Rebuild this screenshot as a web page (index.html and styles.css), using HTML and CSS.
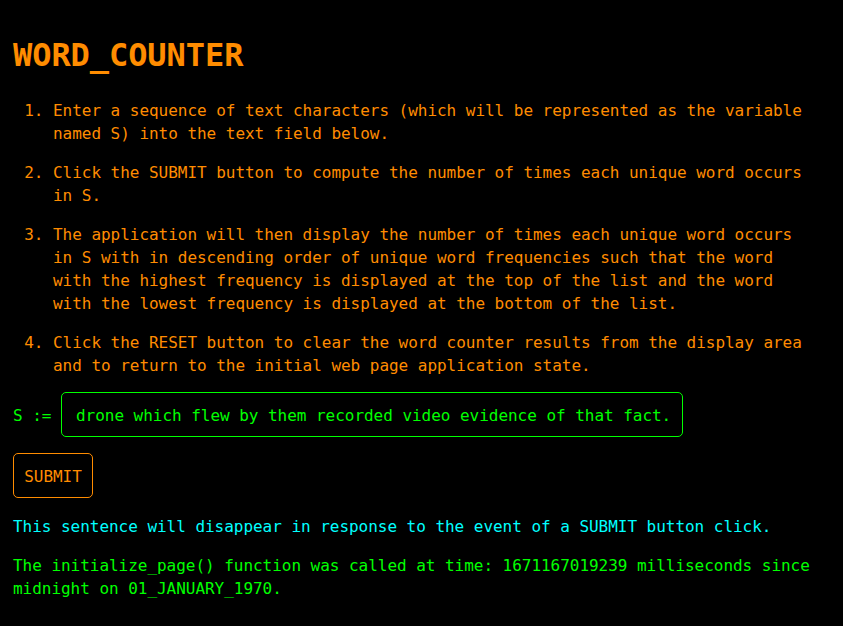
FILE: index.html
```html
<!DOCTYPE html>
<html>
<head>
<meta charset="utf-8">
<title>WORD_COUNTER</title>
<link rel="stylesheet" href="styles.css">
</head>
<body>
<h1 class="title">WORD_COUNTER</h1>
<ol class="steps">
<li>Enter a sequence of text characters (which will be represented as the variable named S) into the text field below.</li>
<li>Click the SUBMIT button to compute the number of times each unique word occurs in S.</li>
<li>The application will then display the number of times each unique word occurs in S with in descending order of unique word frequencies such that the word with the highest frequency is displayed at the top of the list and the word with the lowest frequency is displayed at the bottom of the list.</li>
<li>Click the RESET button to clear the word counter results from the display area and to return to the initial web page application state.</li>
</ol>
<div class="input-row">
<span class="label">S :=</span>
<input class="text-field" type="text" value="drone which flew by them recorded video evidence of that fact.">
</div>
<div class="button-row">
<button class="submit">SUBMIT</button>
</div>
<p class="notice">This sentence will disappear in response to the event of a SUBMIT button click.</p>
<p class="status">The initialize_page() function was called at time: 1671167019239 milliseconds since midnight on 01_JANUARY_1970.</p>
</body>
</html>
```
FILE: styles.css
```css
html, body {
  background: #000000;
}
body {
  margin: 0;
  padding: 11px 24px 0 13px;
  font-family: "DejaVu Sans Mono", monospace;
  font-size: 16px;
  line-height: 23px;
  letter-spacing: -0.033px;
  color: #ff8c00;
}
.title {
  font-size: 32px;
  line-height: 46px;
  font-weight: bold;
  letter-spacing: -0.07px;
  margin: 21px 0 21px 0;
  color: #ff8c00;
}
.steps {
  margin: 0 0 16px 0;
  padding-left: 40px;
}
.steps li {
  margin-bottom: 16px;
}
.steps li:last-child {
  margin-bottom: 0;
}
.input-row {
  display: flex;
  align-items: center;
  margin: -1px 0 16px 0;
  color: #00ff00;
}
.label {
  margin-right: 9.6px;
  position: relative;
  top: 1px;
}
.text-field {
  box-sizing: border-box;
  width: 622px;
  height: 45px;
  padding: 2px 9px 0 14px;
  border: 1px solid #00ff00;
  border-radius: 5px;
  background: #000000;
  color: #00ff00;
  font-family: "DejaVu Sans Mono", monospace;
  font-size: 16px;
  letter-spacing: -0.033px;
  outline: none;
}
.button-row {
  margin: 0 0 17px 0;
}
.submit {
  box-sizing: border-box;
  width: 80px;
  height: 45px;
  padding: 2px 10px 0 10px;
  border: 1px solid #ff8c00;
  border-radius: 5px;
  background: #000000;
  color: #ff8c00;
  font-family: "DejaVu Sans Mono", monospace;
  font-size: 16px;
  letter-spacing: -0.033px;
  cursor: pointer;
}
.notice {
  margin: 0 0 16px 0;
  color: #00ffff;
}
.status {
  margin: 0;
  color: #00ff00;
}
```
